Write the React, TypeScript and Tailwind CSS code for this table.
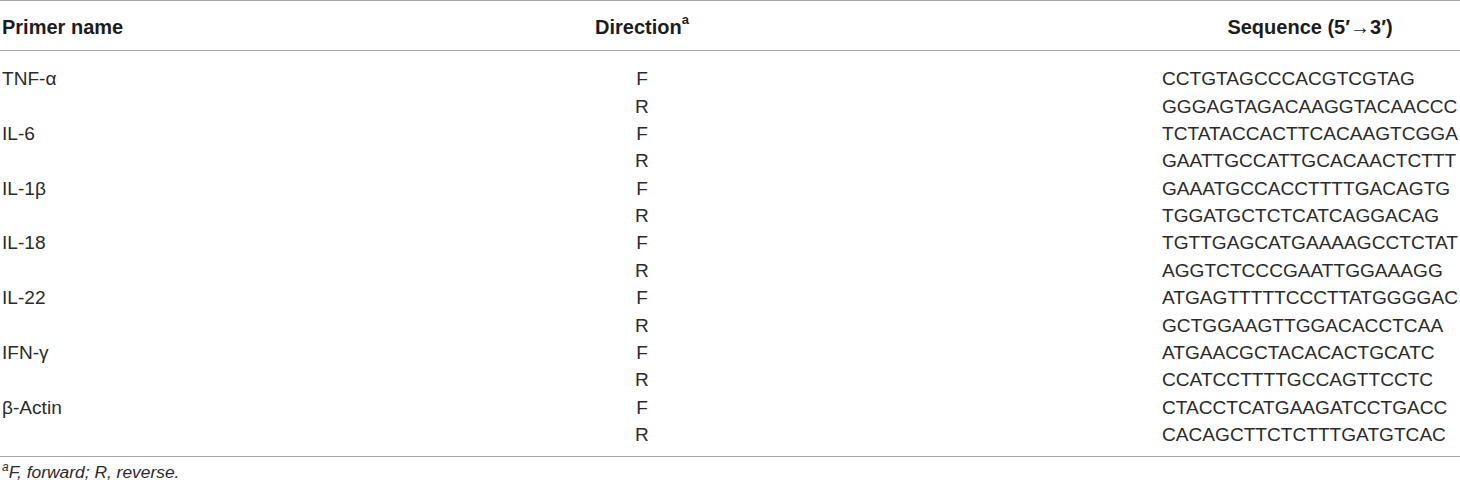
import React from "react";

const rows: [string, string, string][] = [
  ["TNF-α", "F", "CCTGTAGCCCACGTCGTAG"],
  ["", "R", "GGGAGTAGACAAGGTACAACCC"],
  ["IL-6", "F", "TCTATACCACTTCACAAGTCGGA"],
  ["", "R", "GAATTGCCATTGCACAACTCTTT"],
  ["IL-1β", "F", "GAAATGCCACCTTTTGACAGTG"],
  ["", "R", "TGGATGCTCTCATCAGGACAG"],
  ["IL-18", "F", "TGTTGAGCATGAAAAGCCTCTAT"],
  ["", "R", "AGGTCTCCCGAATTGGAAAGG"],
  ["IL-22", "F", "ATGAGTTTTTCCCTTATGGGGAC"],
  ["", "R", "GCTGGAAGTTGGACACCTCAA"],
  ["IFN-γ", "F", "ATGAACGCTACACACTGCATC"],
  ["", "R", "CCATCCTTTTGCCAGTTCCTC"],
  ["β-Actin", "F", "CTACCTCATGAAGATCCTGACC"],
  ["", "R", "CACAGCTTCTCTTTGATGTCAC"],
];

export default function App() {
  return (
    <div
      className="w-[1460px] h-[486px] bg-white overflow-hidden"
      style={{ fontFamily: '"Liberation Sans", Arial, sans-serif' }}
    >
      <div className="border-t border-b border-[#a8a8a8] h-[51px] pt-[3px] grid grid-cols-[540px_200px_420px_1fr] px-[2px] items-center text-[20px] font-bold text-[#1c1c1c]">
        <div>Primer name</div>
        <div className="text-center">
          Direction<sup className="text-[13px] font-bold top-[-0.75em]">a</sup>
        </div>
        <div />
        <div className="text-center">Sequence (5′→3′)</div>
      </div>
      <div className="pt-[14px] pb-[8px] border-b border-[#a8a8a8] text-[19.1px] text-[#2b2b2b]">
        {rows.map((r, i) => (
          <div
            key={i}
            className="grid grid-cols-[540px_200px_420px_1fr] px-[2px] h-[27.4px] items-center leading-none"
          >
            <div>{r[0]}</div>
            <div className="text-center">{r[1]}</div>
            <div />
            <div>{r[2]}</div>
          </div>
        ))}
      </div>
      <div className="pt-[5px] px-[2px] text-[17.4px] italic text-[#2b2b2b] leading-[20px]">
        <sup className="text-[12px] top-[-0.6em]">a</sup>F, forward; R, reverse.
      </div>
    </div>
  );
}
